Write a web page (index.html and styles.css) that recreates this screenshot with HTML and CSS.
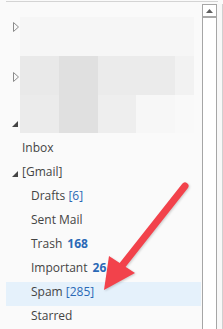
FILE: index.html
```html
<!DOCTYPE html>
<html>
<head>
<meta charset="utf-8">
<link rel="stylesheet" href="styles.css">
</head>
<body>
<div class="topline"></div>
<div class="frame">
  <div class="tree">
    <div class="accounts">
      <span class="tri tri-1"><svg width="6" height="10" viewBox="0 0 6 10"><polygon points="0.5,0.5 5.5,5 0.5,9.5" fill="none" stroke="#8c8c8c" stroke-width="1"/></svg></span>
      <div class="blk faint"></div>
      <span class="tri tri-2"><svg width="6" height="10" viewBox="0 0 6 10"><polygon points="0.5,0.5 5.5,5 0.5,9.5" fill="none" stroke="#8c8c8c" stroke-width="1"/></svg></span>
      <div class="blk c-e9"></div>
      <div class="blk c-e0"></div>
      <div class="blk c-eb"></div>
      <div class="blk c-eb"></div>
      <div class="blk c-f2"></div>
      <span class="tri tri-3"><svg width="6" height="6" viewBox="0 0 6 6"><polygon points="6,0 6,6 0,6" fill="#444"/></svg></span>
      <div class="blk c-eb"></div>
      <div class="blk c-e0"></div>
      <div class="blk c-ee"></div>
      <div class="blk c-f7"></div>
      <div class="blk c-f9"></div>
    </div>
    <ul class="folders">
      <li class="row top">Inbox</li>
      <li class="row parent"><span class="tri-open"><svg width="6" height="6" viewBox="0 0 6 6"><polygon points="6,0 6,6 0,6" fill="#444"/></svg></span>[Gmail]</li>
      <li class="row sub">Drafts <span class="cnt">[6]</span></li>
      <li class="row sub">Sent Mail</li>
      <li class="row sub">Trash<span class="unread">168</span></li>
      <li class="row sub">Important<span class="unread">26</span></li>
      <li class="row sub selected">Spam <span class="cnt">[285]</span></li>
      <li class="row sub">Starred</li>
    </ul>
  </div>
  <div class="scrollbar">
    <div class="sb-up"><svg width="7" height="4" viewBox="0 0 7 4"><polygon points="3.5,0 7,4 0,4" fill="#606060"/></svg></div>
    <div class="sb-track"></div>
  </div>
  <div class="gutter"></div>
</div>
<svg class="callout" width="223" height="329" viewBox="0 0 223 329">
  <line x1="185" y1="186" x2="121" y2="267" stroke="#f2424b" stroke-width="7" stroke-linecap="round"/>
  <polygon points="109,256 135,273 104,290" fill="#f2424b"/>
</svg>
</body>
</html>
```

FILE: styles.css
```css
html, body {
  margin: 0;
  padding: 0;
}
body {
  width: 223px;
  height: 329px;
  overflow: hidden;
  background: #fafafa;
  font-family: "Open Sans", "Noto Sans", sans-serif;
  font-size: 12px;
  color: #444444;
  position: relative;
}
.topline {
  height: 1px;
  margin: 1px 5px 2px 6px;
  background: #d4d4d4;
}
.frame {
  display: flex;
  height: 325px;
}
.tree {
  width: 202px;
  flex: none;
  padding-top: 13px;
  box-sizing: border-box;
}
.accounts {
  display: grid;
  grid-template-columns: 20px 39px 39px 38px 39px 19px;
  grid-template-rows: 39px 39px 38px;
}
.tri {
  display: block;
  line-height: 0;
}
.tri-1 { margin: 5px 0 0 13px; }
.tri-2 { margin: 16px 0 0 13px; }
.tri-3 { margin: 26px 0 0 12px; }
.blk.faint {
  grid-column: 2 / 7;
  background: #f6f6f6;
}
.c-e9 { background: #e9e9e9; }
.c-e0 { background: #e0e0e0; }
.c-eb { background: #ebebeb; }
.c-ee { background: #eeeeee; }
.c-f2 { background: #f2f2f2; }
.c-f7 { background: #f7f7f7; }
.c-f9 { background: #f9f9f9; }
.folders {
  list-style: none;
  margin: 5px 1px 0 6px;
  padding: 0;
}
.row {
  height: 24px;
  box-sizing: border-box;
  line-height: 20px;
  padding-bottom: 4px;
  display: flex;
  align-items: center;
  white-space: pre;
}
.row.top { padding-left: 16px; }
.row.parent { padding-left: 6px; }
.row.sub { padding-left: 25px; }
.tri-open {
  display: block;
  line-height: 0;
  width: 6px;
  margin-right: 4px;
  margin-top: 3px;
}
.cnt { color: #2a69b6; }
.unread {
  color: #2a69b6;
  font-weight: 700;
  margin-left: 5px;
}
.selected { background: #e5f1fb; }
.scrollbar {
  width: 15px;
  flex: none;
  box-sizing: border-box;
  border: 1px solid #a6a6a6;
  border-bottom: none;
  background: #ffffff;
  display: flex;
  flex-direction: column;
}
.sb-up {
  height: 13px;
  display: flex;
  justify-content: center;
  align-items: flex-start;
  padding-top: 4px;
  box-sizing: border-box;
  border-bottom: 2px solid #a8a8a8;
}
.sb-up svg { display: block; }
.sb-track { flex: 1; }
.gutter {
  width: 6px;
  flex: none;
  box-sizing: border-box;
  border-right: 1px solid #d0d0d0;
  background: #f8f8f8;
}
.callout {
  position: absolute;
  left: 0;
  top: 0;
  filter: drop-shadow(1px 1px 1px rgba(0,0,0,0.18));
}
```
